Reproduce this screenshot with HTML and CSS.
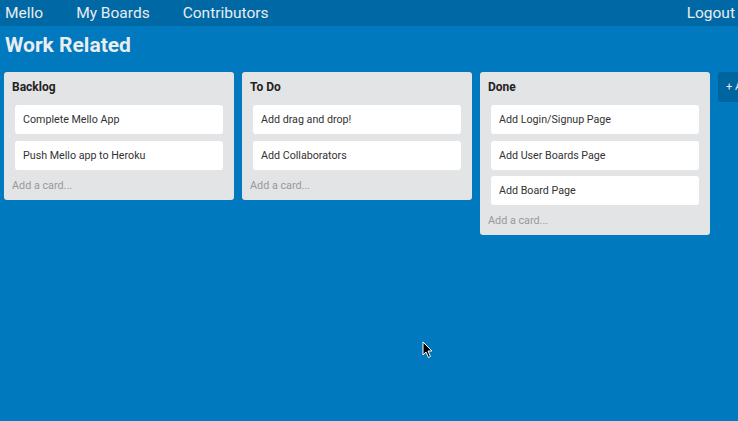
FILE: index.html
```html
<!DOCTYPE html>
<html>
<head>
<meta charset="utf-8">
<link rel="stylesheet" href="styles.css">
</head>
<body>
<nav class="nav">
  <div class="nav-left">
    <a class="nav-link">Mello</a>
    <a class="nav-link">My Boards</a>
    <a class="nav-link">Contributors</a>
  </div>
  <a class="nav-link">Logout</a>
</nav>
<main class="board">
  <h1 class="board-title">Work Related</h1>
  <div class="lists">
    <section class="list">
      <h2 class="list-title">Backlog</h2>
      <div class="card">Complete Mello App</div>
      <div class="card">Push Mello app to Heroku</div>
      <div class="add-card">Add a card...</div>
    </section>
    <section class="list">
      <h2 class="list-title">To Do</h2>
      <div class="card">Add drag and drop!</div>
      <div class="card">Add Collaborators</div>
      <div class="add-card">Add a card...</div>
    </section>
    <section class="list">
      <h2 class="list-title">Done</h2>
      <div class="card">Add Login/Signup Page</div>
      <div class="card">Add User Boards Page</div>
      <div class="card">Add Board Page</div>
      <div class="add-card">Add a card...</div>
    </section>
    <div class="add-list">+ Add a list...</div>
  </div>
</main>
<svg class="cursor" width="12" height="18" viewBox="0 0 12 18"><path d="M1 1 L1 14 L4 11 L6.5 16.5 L8.5 15.5 L6 10 L10 10 Z" fill="#000" stroke="#fff" stroke-width="1"/></svg>
</body>
</html>
```
FILE: styles.css
```css
html, body {
  margin: 0;
  height: 100%;
}
body {
  background: #0079bf;
  font-family: Roboto, "Liberation Sans", sans-serif;
  overflow: hidden;
  position: relative;
}
.nav {
  height: 26px;
  background: #0068a4;
  display: flex;
  align-items: center;
  justify-content: space-between;
  padding: 0 3px 0 5px;
}
.nav-left {
  display: flex;
  gap: 33px;
}
.nav-link {
  color: #e9edf0;
  font-size: 15.5px;
  line-height: 21px;
}
.board {
  padding: 0 4px;
}
.board-title {
  margin: 0;
  padding: 7px 1px 0;
  font-size: 21px;
  line-height: 25px;
  font-weight: 700;
  color: #e9edf0;
}
.lists {
  display: flex;
  align-items: flex-start;
  gap: 8px;
  margin-top: 14px;
}
.list {
  flex: 0 0 230px;
  background: #e2e4e6;
  border-radius: 3px;
  padding: 8px 11px 6px;
  box-sizing: border-box;
}
.list-title {
  margin: 0 0 10px -3px;
  font-size: 12px;
  line-height: 15px;
  font-weight: 700;
  color: #222;
}
.card {
  background: #fff;
  border-radius: 3px;
  height: 29px;
  line-height: 29px;
  padding: 0 8px;
  font-size: 10.7px;
  color: #333;
  margin-bottom: 6.5px;
}
.add-card {
  margin-left: -3px;
  padding-top: 1.5px;
  font-size: 10.8px;
  line-height: 16px;
  color: #999;
}
.add-list {
  flex: 0 0 auto;
  background: #00649e;
  color: #e9edf0;
  font-size: 11px;
  border-radius: 3px;
  padding: 0 8px;
  height: 30px;
  line-height: 30px;
  white-space: nowrap;
}
.cursor {
  position: absolute;
  left: 422px;
  top: 341px;
}
```
